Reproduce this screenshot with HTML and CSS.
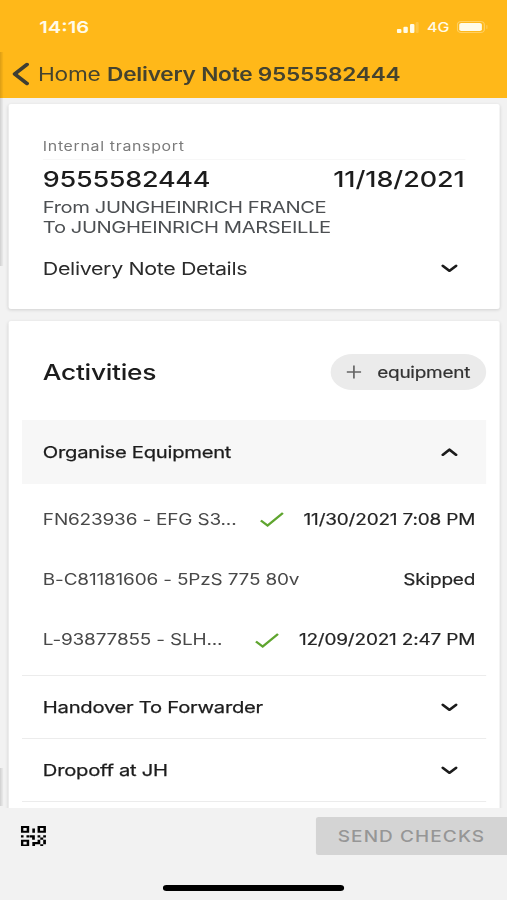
FILE: index.html
```html
<!DOCTYPE html>
<html lang="en">
<head>
    <meta charset="UTF-8">
    <meta name="viewport" content="width=device-width, initial-scale=1.0">
    <title>Delivery Note 9555582444</title>
    <link rel="stylesheet" href="styles.css">
</head>
<body>
    <div class="screen">
        <header class="top-bar">
            <div class="status-bar">
                <span class="clock">14:16</span>
                <div class="status-icons">
                    <svg class="signal" width="18" height="11" viewBox="0 0 18 11">
                        <rect x="0" y="7" width="3.8" height="4" rx="1"/>
                        <rect x="5.4" y="4.8" width="3.6" height="6.2" rx="1"/>
                        <rect x="10.8" y="2" width="3.6" height="9" rx="1"/>
                        <rect class="faint" x="15.4" y="0" width="2.6" height="11" rx="1"/>
                    </svg>
                    <span class="network">4G</span>
                    <svg class="battery" width="26" height="12" viewBox="0 0 26 12">
                        <rect class="battery-outline" x="0.5" y="0.5" width="22" height="11" rx="3"/>
                        <rect x="2" y="2" width="18.5" height="8" rx="1.8"/>
                        <rect class="faint" x="23.8" y="4" width="1.4" height="4" rx="0.7"/>
                    </svg>
                </div>
            </div>
            <nav class="nav-bar">
                <svg class="back" width="14" height="24" viewBox="0 0 14 24">
                    <path d="M12 2.5 L2 12 L12 21.5"/>
                </svg>
                <span class="nav-home">Home</span>
                <h1 class="nav-title">Delivery Note 9555582444</h1>
            </nav>
        </header>

        <main class="content">
            <section class="card note-card">
                <p class="note-type">Internal transport</p>
                <div class="note-head">
                    <span class="note-number">9555582444</span>
                    <span class="note-date">11/18/2021</span>
                </div>
                <p class="note-from">From JUNGHEINRICH FRANCE</p>
                <p class="note-to">To JUNGHEINRICH MARSEILLE</p>
                <div class="note-details">
                    <span>Delivery Note Details</span>
                    <svg class="chevron" width="14" height="10" viewBox="0 0 14 10"><path d="M1.6 2.8 L7 7.8 L12.4 2.8"/></svg>
                </div>
            </section>

            <section class="card activities">
                <div class="activities-head">
                    <h2>Activities</h2>
                    <button class="add-button">
                        <svg width="12" height="14" viewBox="0 0 12 14"><path d="M6 0.5 V13.5 M0 7 H12"/></svg>
                        <span>equipment</span>
                    </button>
                </div>

                <div class="group open">
                    <span>Organise Equipment</span>
                    <svg class="chevron" width="14" height="10" viewBox="0 0 14 10"><path d="M1.6 7.8 L7 2.6 L12.4 7.8"/></svg>
                </div>
                <ul class="items">
                    <li class="item">
                        <span class="item-name">FN623936 - EFG S3...</span>
                        <svg class="check" width="20" height="16" viewBox="0 0 20 16"><path d="M1 9.5 L6.5 14.5 L19 2"/></svg>
                        <span class="item-state">11/30/2021 7:08 PM</span>
                    </li>
                    <li class="item">
                        <span class="item-name">B-C81181606 - 5PzS 775 80v</span>
                        <span class="item-state">Skipped</span>
                    </li>
                    <li class="item">
                        <span class="item-name">L-93877855 - SLH...</span>
                        <svg class="check" width="20" height="16" viewBox="0 0 20 16"><path d="M1 9.5 L6.5 14.5 L19 2"/></svg>
                        <span class="item-state">12/09/2021 2:47 PM</span>
                    </li>
                </ul>

                <div class="group">
                    <span>Handover To Forwarder</span>
                    <svg class="chevron" width="14" height="10" viewBox="0 0 14 10"><path d="M1.6 2.8 L7 7.8 L12.4 2.8"/></svg>
                </div>
                <div class="group">
                    <span>Dropoff at JH</span>
                    <svg class="chevron" width="14" height="10" viewBox="0 0 14 10"><path d="M1.6 2.8 L7 7.8 L12.4 2.8"/></svg>
                </div>
            </section>
        </main>

        <footer class="bottom-bar">
            <div class="actions">
                <svg class="qr" width="20.5" height="20.5" viewBox="0 0 24 24">
                    <path fill-rule="evenodd" d="M0 0h8v8H0z M2.4 2.4v3.2h3.2V2.4z M16 0h8v8h-8z M18.4 2.4v3.2h3.2V2.4z M0 16h8v8H0z M2.4 18.4v3.2h3.2v-3.2z"/>
                    <path d="M11 3h2.5v5H11z M0 10.8h2.6v2.6H0z M5.4 10.8H8v2.6H5.4z M8.4 10.8h5v5.2h-2.6v-2.6H8.4z M16 10.8h2.6v2.6H16z M21.4 10.8H24v2.6h-2.6z M18.6 13.4h2.8V16h-2.8z M16 16h2.6v5.4h-5V24H11v-5.2h5z M21.4 16H24v5.4h-2.6z M18.6 21.4h2.8V24h-2.8z"/>
                </svg>
                <button class="send-button">SEND CHECKS</button>
            </div>
            <div class="home-indicator"></div>
        </footer>

        <div class="edge edge-top"></div>
        <div class="edge edge-bottom"></div>
    </div>
</body>
</html>
```
FILE: styles.css
```css
* {
    margin: 0;
    padding: 0;
    box-sizing: border-box;
}

body {
    font-family: Inter, Roboto, "Liberation Sans", sans-serif;
    background: #f2f2f2;
    color: #1c1c1c;
    height: 900px;
    overflow: hidden;
}

.screen {
    position: relative;
    display: flex;
    flex-direction: column;
    width: 414px;
    height: 900px;
    transform: scaleX(1.22464);
    transform-origin: 0 0;
    white-space: nowrap;
}

svg {
    display: block;
    flex-shrink: 0;
}

.top-bar {
    height: 98px;
    background: #ffb819;
    flex-shrink: 0;
}

.status-bar {
    display: flex;
    align-items: center;
    justify-content: space-between;
    height: 50px;
    padding: 4px 15px 0 32px;
    color: #fffbe8;
}

.clock {
    font-size: 16.5px;
    font-weight: 600;
}

.status-icons {
    display: flex;
    align-items: center;
    fill: #fffbe8;
}

.network {
    font-size: 13px;
    font-weight: 500;
    margin: 0 6px 0 7px;
}

.faint {
    opacity: 0.2;
}

.battery-outline {
    fill: none;
    stroke: #fffbe8;
    opacity: 0.35;
}

.nav-bar {
    display: flex;
    align-items: center;
    height: 48px;
    padding-left: 9.5px;
    color: #45432f;
}

.back {
    fill: none;
    stroke: #3f3e33;
    stroke-width: 3.3;
    stroke-linecap: round;
    stroke-linejoin: round;
}

.nav-home {
    font-size: 18.5px;
    letter-spacing: -0.2px;
    margin-left: 7.5px;
}

.nav-title {
    font-size: 18.5px;
    font-weight: 600;
    letter-spacing: -0.2px;
    margin-left: 5.4px;
}

.content {
    display: flex;
    flex-direction: column;
    gap: 12px;
    height: 710px;
    padding: 6px 6px 0 6.5px;
    overflow: hidden;
}

.card {
    background: #fff;
    border-radius: 2px;
    box-shadow: 0 1px 3px rgba(0, 0, 0, 0.14);
    flex-shrink: 0;
}

.note-card {
    height: 205px;
    padding: 32px 28.5px 0;
}

.note-type {
    font-size: 13px;
    line-height: 20px;
    letter-spacing: 0.55px;
    color: #7b7b7b;
    padding-bottom: 3px;
    border-bottom: 1px solid #f7f7f7;
}

.note-head {
    display: flex;
    justify-content: space-between;
    line-height: 30px;
    padding-top: 4px;
    font-size: 22px;
    font-weight: 500;
    letter-spacing: -0.2px;
}

.note-date {
    letter-spacing: -0.05px;
}

.note-from,
.note-to {
    font-size: 16.5px;
    line-height: 20px;
    letter-spacing: -0.35px;
    color: #4c4f52;
}

.note-from {
    margin-top: 3px;
}

.note-details {
    display: flex;
    align-items: center;
    justify-content: space-between;
    height: 40px;
    margin-top: 11px;
    padding-right: 6px;
    font-size: 17.5px;
    letter-spacing: -0.3px;
    color: #2b2b2b;
}

.chevron {
    fill: none;
    stroke: #1c1c1c;
    stroke-width: 2.4;
    stroke-linecap: round;
    stroke-linejoin: round;
}

.activities {
    height: 520px;
    padding: 0 11px 0 11.5px;
}

.activities-head {
    display: flex;
    align-items: center;
    justify-content: space-between;
    height: 99px;
    padding: 3px 0 0 17px;
}

.activities-head h2 {
    font-size: 21.5px;
    font-weight: 500;
    letter-spacing: -0.25px;
}

.add-button {
    display: flex;
    align-items: center;
    gap: 13px;
    height: 36px;
    width: 127px;
    padding-left: 13px;
    border: none;
    border-radius: 18px;
    background: #ebebeb;
    color: #333;
    font-family: inherit;
    font-size: 15.5px;
    letter-spacing: -0.2px;
    -webkit-text-stroke: 0.2px currentColor;
}

.add-button svg {
    fill: none;
    stroke: #666;
    stroke-width: 1.4;
}

.group {
    display: flex;
    align-items: center;
    justify-content: space-between;
    height: 63px;
    padding: 0 23.5px 0 17px;
    border-bottom: 1px solid #ececec;
    font-size: 16.5px;
    letter-spacing: -0.22px;
    -webkit-text-stroke: 0.25px currentColor;
}

.group.open {
    height: 64px;
    border-bottom: none;
    background: #f7f7f7;
}

.items {
    list-style: none;
    padding: 5px 9px 5px 17px;
    border-bottom: 1px solid #ececec;
}

.item {
    display: flex;
    align-items: center;
    height: 60.3px;
    font-size: 15.5px;
    letter-spacing: -0.15px;
}

.item-name {
    color: #484848;
}

.item-state {
    margin-left: auto;
    letter-spacing: -0.15px;
    color: #242424;
    -webkit-text-stroke: 0.2px currentColor;
}

.check {
    margin-left: auto;
    fill: none;
    stroke: #5fa52f;
    stroke-width: 2;
}

.check + .item-state {
    margin-left: 16px;
}

.bottom-bar {
    display: flex;
    flex-direction: column;
    align-items: center;
    height: 92px;
    background: #f2f2f2;
}

.actions {
    display: flex;
    align-items: center;
    justify-content: space-between;
    width: 100%;
    height: 56px;
    padding-left: 17px;
}

.send-button {
    width: 156px;
    height: 38px;
    border: none;
    border-radius: 2px 0 0 2px;
    background: #d4d4d4;
    color: #969696;
    font-family: inherit;
    font-size: 15.5px;
    font-weight: 500;
    letter-spacing: 0.9px;
}

.home-indicator {
    width: 148px;
    height: 6px;
    margin-top: 21px;
    border-radius: 3px;
    background: #000;
}

/* shadow of the page underneath, along the left border */
.edge {
    position: absolute;
    left: 0;
    width: 3px;
    background: linear-gradient(90deg, rgba(0, 0, 0, 0.14), rgba(0, 0, 0, 0));
}

.edge-top {
    top: 52px;
    height: 214px;
}

.edge-bottom {
    top: 768px;
    height: 38px;
}
```
